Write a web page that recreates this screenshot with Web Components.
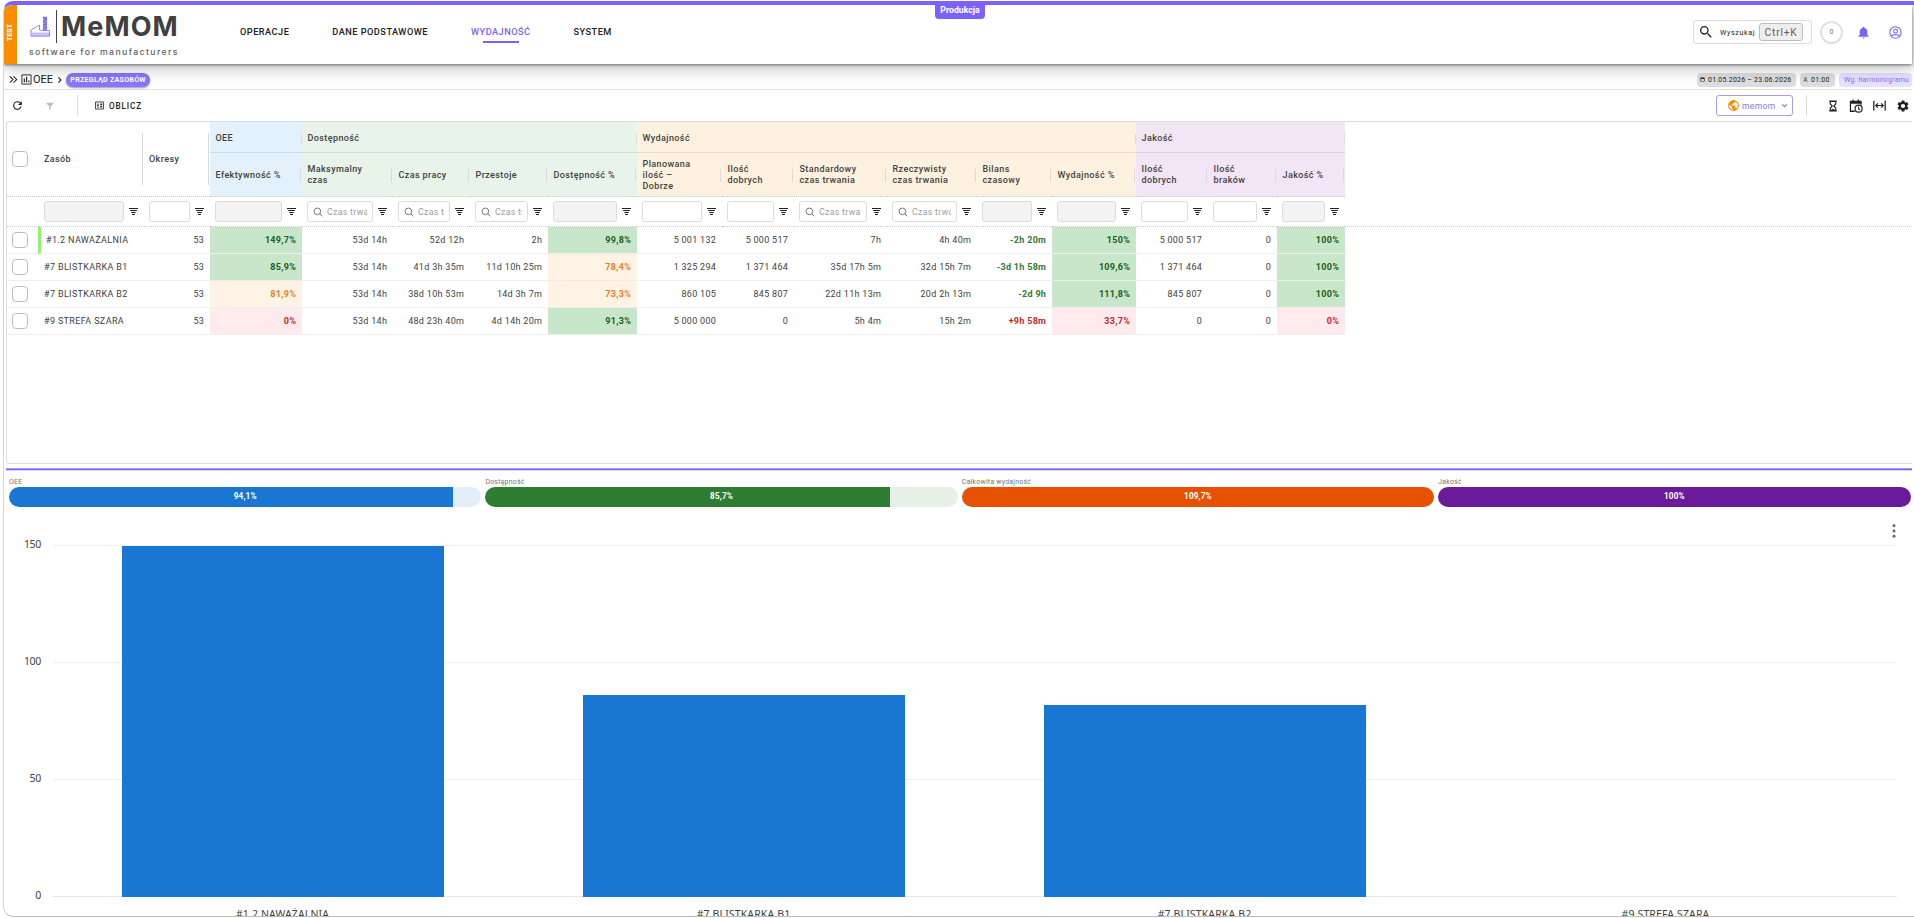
<!DOCTYPE html>
<html lang="pl">
<head>
<meta charset="utf-8">
<title>MeMOM - OEE</title>
<style>
    html, body {
        margin: 0;
        height: 918px;
        overflow: hidden;
        background: #fff;
        font-family: Roboto, "Liberation Sans", sans-serif;
        color: #424242;
    }
    mm-shell { --primary: #7b61ff; }
</style>
</head>
<body>
<mm-shell>
    <mm-header>
        <mm-nav-item>OPERACJE</mm-nav-item>
        <mm-nav-item>DANE PODSTAWOWE</mm-nav-item>
        <mm-nav-item active>WYDAJNOŚĆ</mm-nav-item>
        <mm-nav-item>SYSTEM</mm-nav-item>
    </mm-header>
    <mm-breadcrumb></mm-breadcrumb>
    <mm-toolbar></mm-toolbar>
    <mm-grid></mm-grid>
    <mm-splitter></mm-splitter>
    <mm-kpis>
        <mm-progress value="94.1" color="#1976d2" track="#e3eef9"><span slot="label">OEE</span>94,1%</mm-progress>
        <mm-progress value="85.7" color="#2e7d32" track="#e6f0e6"><span slot="label">Dostępność</span>85,7%</mm-progress>
        <mm-progress value="100" color="#e65100" track="#fbe9e0"><span slot="label">Całkowita wydajność</span>109,7%</mm-progress>
        <mm-progress value="100" color="#6a1b9a" track="#efe6f4"><span slot="label">Jakość</span>100%</mm-progress>
    </mm-kpis>
    <mm-chart></mm-chart>
</mm-shell>

<script>
const ICONS = {
    search: '<path d="M15.5 14h-.8l-.3-.3A6.5 6.5 0 1 0 13.7 14.4l.3.3v.8l5 5 1.5-1.5-5-5zm-6 0a4.5 4.5 0 1 1 0-9 4.5 4.5 0 0 1 0 9z"/>',
    bell: '<path d="M12 23a2 2 0 0 0 2-2h-4a2 2 0 0 0 2 2zm7-6.500v-6c0-3.300-1.700-6-5.300-6.700V3a1.700 1.700 0 0 0-3.400 0v.8C6.700 4.500 5 7.200 5 10.500v6L2.500 19v1h19v-1z"/>',
    user: '<path fill="none" stroke="currentColor" stroke-width="2" d="M12 1.500a10.500 10.500 0 1 0 0 21 10.500 10.500 0 0 0 0-21zM4.500 18.800c3-3.800 12-3.800 15 0"/><circle cx="12" cy="9.500" r="3.500" fill="none" stroke="currentColor" stroke-width="2"/>',
    chevrons: '<path fill="none" stroke="currentColor" stroke-width="2.300" d="M4 5l7 7-7 7M12 5l7 7-7 7"/>',
    chevron: '<path fill="none" stroke="currentColor" stroke-width="3.200" d="M7 4l8 8-8 8"/>',
    down: '<path fill="none" stroke="currentColor" stroke-width="3.600" d="M4 8l8 8 8-8"/>',
    chart: '<path fill="none" stroke="currentColor" stroke-width="2" d="M2 2h20v20H2z"/><path d="M6 10h2.500v8H6zM11 6h2.500v12H11zM16 14h2.500v4H16z"/>',
    refresh: '<path d="M17.650 6.350A8 8 0 1 0 19.730 14h-2.080A6 6 0 1 1 12 6c1.660 0 3.140.690 4.220 1.780L13 11h7V4z"/>',
    funnel: '<path d="M2 2h20v3l-7.500 8v9h-5v-9L2 5z"/>',
    calc: '<path fill="none" stroke="currentColor" stroke-width="2.200" d="M1.500 2.500h21v19h-21z"/><path d="M5 7h6v2H5zM5 11h6v2H5zM5 15h6v2H5zM14 6.500h5v4.500h-5zM14 13h5v4.500h-5z"/>',
    calendar: '<path d="M2 2h20v20H2zM5 9v10h14V9z" fill-rule="evenodd"/>',
    person: '<circle cx="12" cy="7" r="5" fill="none" stroke="currentColor" stroke-width="2.500"/><path fill="none" stroke="currentColor" stroke-width="2.500" d="M3 23l6-11M21 23l-6-11M6 18h12"/>',
    globe: '<path d="M12 2a10 10 0 1 0 0 20 10 10 0 0 0 0-20zm-1 17.930A8 8 0 0 1 4.210 10.210L9 15v1a2 2 0 0 0 2 2zm6.900-2.540A2 2 0 0 0 16 16h-1v-3a1 1 0 0 0-1-1H8v-2h2a1 1 0 0 0 1-1V7h2a2 2 0 0 0 2-2v-.410a8 8 0 0 1 2.900 12.800z"/>',
    hourglass: '<path fill="none" stroke="currentColor" stroke-width="2.200" d="M6.500 3h11v5L13.500 12l4 4V21h-11v-5l4-4-4-4z"/><path d="M4.500 1h15v2.500h-15zM4.500 20.500h15V23h-15zM9 17.500h6v2H9z"/>',
    schedule: '<path fill="none" stroke="currentColor" stroke-width="2.200" d="M10 21H2.500V4h18v6M7 1v4M16 1v4"/><path d="M2 4h19v4H2z"/><circle cx="16.500" cy="16.500" r="6" fill="none" stroke="currentColor" stroke-width="2"/><path fill="none" stroke="currentColor" stroke-width="1.800" d="M16.500 13v4l2.500 1.500"/>',
    fit: '<path fill="none" stroke="currentColor" stroke-width="2.300" d="M1.500 3v18M22.500 3v18M5 12h14M9 8l-4 4 4 4M15 8l4 4-4 4"/>',
    gear: '<path d="M19.140 12.940a7 7 0 0 0 0-1.880l2.030-1.580a.5.5 0 0 0 .120-.610l-1.920-3.320a.5.5 0 0 0-.590-.220l-2.390.960a7 7 0 0 0-1.620-.940l-.360-2.540a.5.5 0 0 0-.480-.410h-3.840a.5.5 0 0 0-.470.410l-.360 2.540a7 7 0 0 0-1.620.940l-2.390-.960a.5.5 0 0 0-.590.220L2.740 8.870a.5.5 0 0 0 .120.610l2.030 1.580a7 7 0 0 0 0 1.880l-2.030 1.580a.5.5 0 0 0-.120.610l1.920 3.320c.120.220.370.290.590.220l2.390-.960a7 7 0 0 0 1.620.940l.360 2.540c.050.240.240.410.480.410h3.840c.240 0 .440-.170.470-.410l.360-2.540a7 7 0 0 0 1.620-.940l2.390.960a.5.5 0 0 0 .590-.220l1.920-3.320a.5.5 0 0 0-.120-.610zM12 15.600a3.600 3.600 0 1 1 0-7.200 3.600 3.600 0 0 1 0 7.200z"/>',
    lines: '<path d="M0 2.700h24v2.670H0zM3 8h18v2.500H3zM6 13.300h12v2.500H6zM8 18.600h8v2.500H8z"/>',
    lens: '<circle cx="10.500" cy="10.500" r="8" fill="none" stroke="currentColor" stroke-width="2.400"/><path fill="none" stroke="currentColor" stroke-width="2.400" d="M16.500 16.500l6 6"/>',
    dots: '<circle cx="12" cy="3" r="2.500"/><circle cx="12" cy="12" r="2.500"/><circle cx="12" cy="21" r="2.500"/>'
}

class MmElement extends HTMLElement {
    constructor() {
        super()
        this.attachShadow({ mode: "open" })
    }
    connectedCallback() {
        const template = document.createElement("template")
        template.innerHTML = `<style>
            :host { display: block; box-sizing: border-box; }
            * { box-sizing: border-box; }
            ${this.getStyles()}
        </style>${this.getTemplate()}`
        this.shadowRoot.replaceChildren(template.content.cloneNode(true))
    }
}

class MmIcon extends MmElement {
    getStyles() {
        return `
            :host { width: ${this.getAttribute("size") || 12}px; flex: none; }
            svg { display: block; width: 100%; fill: currentColor; }
        `
    }
    getTemplate() {
        return `<svg viewBox="0 0 24 24">${ICONS[this.getAttribute("name")]}</svg>`
    }
}

class MmShell extends MmElement {
    getStyles() {
        return `
            :host { height: 917px; padding: 1px 0 0 3px; overflow: hidden; }
            .frame {
                width: 1920px;
                height: 916px;
                border: 1px solid #d5d5d5;
                border-top: 4px solid var(--primary);
                border-bottom-color: #bdbdbd;
                border-radius: 10px;
                overflow: hidden;
            }
            .body { width: 1908px; }
        `
    }
    getTemplate() {
        return `<div class="frame"><div class="body"><slot></slot></div></div>`
    }
}

class MmNavItem extends MmElement {
    getStyles() {
        return `
            :host {
                font-size: 9.200px;
                font-weight: 500;
                line-height: 12px;
                letter-spacing: .480px;
                color: #212121;
                white-space: nowrap;
            }
            :host([active]) { color: var(--primary); }
            .line { height: 2px; width: 36px; margin: 3px auto 0; }
            :host([active]) .line { background: var(--primary); }
        `
    }
    getTemplate() {
        return `<slot></slot><div class="line"></div>`
    }
}

class MmHeader extends MmElement {
    getStyles() {
        return `
            :host {
                display: flex;
                height: 59px;
                position: relative;
                z-index: 1;
                background: #fff;
                box-shadow: 0 1px 3px rgba(0,0,0,.5), 0 4px 16px rgba(0,0,0,.26);
            }
            .test {
                width: 13px;
                background: #fb8c00;
                color: #fff;
                font-size: 7px;
                font-weight: 900;
                writing-mode: vertical-rl;
                transform: rotate(180deg);
                text-align: center;
                line-height: 13px;
                padding-top: 4px;
            }
            .logo { width: 152px; margin: 4px 0 0 12px; flex: none; }
            .brand { display: flex; height: 35px; }
            .brand svg { width: 22px; height: 24px; margin: 7px 4px 0 1px; }
            .name {
                border-left: 1px solid #424242;
                height: 33px;
                margin-top: 1px;
                padding-left: 4px;
                font: 700 27px/33px Inter, "Open Sans", sans-serif;
                letter-spacing: 1.080px;
                color: #404040;
            }
            .tag {
                font: 500 8.700px/11px Inter, "Open Sans", sans-serif;
                letter-spacing: 1.400px;
                margin: 3px 0 0;
                color: #616161;
                white-space: nowrap;
            }
            nav { display: flex; gap: 43px; margin: 21px 0 0 59px; }
            .env {
                position: absolute;
                left: 931px;
                top: -1px;
                width: 50px;
                height: 15px;
                border-radius: 0 0 4px 4px;
                background: var(--primary);
                color: #fff;
                font-size: 8.700px;
                font-weight: 700;
                line-height: 12px;
                text-align: center;
            }
            .right { margin-left: auto; display: flex; align-items: center; height: 54px; color: var(--primary); padding-right: 10px; }
            .search {
                display: flex;
                align-items: center;
                width: 119px;
                height: 24px;
                border: 1px solid #ddd;
                border-radius: 3px;
                color: #212121;
                font-size: 7.200px;
                letter-spacing: .600px;
                padding-left: 4px;
            }
            .search span { margin-left: 6px; width: 39px; }
            kbd {
                width: 44px;
                height: 18px;
                border: 1px solid #bdbdbd;
                border-radius: 3px;
                background: #eee;
                color: #616161;
                font: 400 10.200px/17px Roboto, sans-serif;
                letter-spacing: .800px;
                text-align: center;
            }
            .count {
                width: 23px;
                height: 23px;
                margin: 0 14px 0 8px;
                border: 2px solid #e0e0e0;
                border-radius: 50%;
                font-size: 7px;
                line-height: 19px;
                text-align: center;
                color: #757575;
            }
        `
    }
    getTemplate() {
        return `
            <div class="test">TEST</div>
            <div class="logo">
                <div class="brand">
                    <svg viewBox="0 0 22 24">
                        <path d="M1.500 16.500h18v3.500h-18z" fill="#c9c0ff"/>
                        <path d="M1 20.200V14L9.500 9v5L13.500 14.500H19.500V20.200H1" fill="none" stroke="#8f7bff" stroke-width=".9"/>
                        <path d="M13 .8h4V14.500h-4z" fill="#8069ff"/>
                        <path d="M14 3v1M16 5v1M14 7v1M16 9v1M14 11v1M16 13v1" stroke="#c9c0ff"/>
                    </svg>
                    <div class="name">MeMOM</div>
                </div>
                <div class="tag">software for manufacturers</div>
            </div>
            <nav><slot></slot></nav>
            <div class="env">Produkcja</div>
            <div class="right">
                <div class="search"><mm-icon name="search" size="16"></mm-icon><span>Wyszukaj</span><kbd>Ctrl+K</kbd></div>
                <div class="count">0</div>
                <mm-icon name="bell" size="13"></mm-icon>
                <mm-icon name="user" size="13" style="margin-left:19px"></mm-icon>
            </div>
        `
    }
}

class MmBreadcrumb extends MmElement {
    getStyles() {
        return `
            :host {
                display: flex;
                align-items: center;
                height: 26px;
                padding: 6px 0 0 4px;
                border-bottom: 1px solid #e0e0e0;
                color: #212121;
            }
            .oee { font-size: 11px; margin-right: 3px; line-height: 14px; }
            .pill {
                width: 84px;
                height: 14px;
                margin-left: 2px;
                border-radius: 7px;
                background: #8c74ff;
                box-shadow: 0 1px 2px rgba(0,0,0,.4);
                color: #fff;
                font-size: 7.200px;
                font-weight: 700;
                letter-spacing: .200px;
                line-height: 14px;
                text-align: center;
                white-space: nowrap;
            }
            .chips { display: flex; gap: 4px; margin-left: auto; width: 215px; flex: none; }
            .chip {
                display: flex;
                align-items: center;
                height: 14px;
                border-radius: 4px;
                background: #dedede;
                padding-left: 3px;
                gap: 3px;
                font-size: 7px;
                letter-spacing: .220px;
                white-space: nowrap;
            }
            .plan { flex: 1; background: #e7e1ff; color: #8670ff; padding-left: 5px; }
        `
    }
    getTemplate() {
        return `
            <mm-icon name="chevrons" size="11"></mm-icon>
            <mm-icon name="chart" size="11" style="margin:0 1px 0 2px"></mm-icon>
            <span class="oee">OEE</span>
            <mm-icon name="chevron" size="8"></mm-icon>
            <div class="pill">PRZEGLĄD ZASOBÓW</div>
            <div class="chips">
                <div class="chip" style="width:99px"><mm-icon name="calendar" size="5"></mm-icon>01.05.2026 – 23.06.2026</div>
                <div class="chip" style="width:35px"><mm-icon name="person" size="5"></mm-icon>01:00</div>
                <div class="chip plan">Wg. harmonogramu</div>
            </div>
        `
    }
}

class MmToolbar extends MmElement {
    getStyles() {
        return `
            :host { display: flex; align-items: center; height: 31px; padding: 0 2px 0 7px; color: #212121; }
            .sep { width: 1px; height: 21px; background: #ddd; }
            .calc { font-size: 8.200px; font-weight: 500; letter-spacing: .850px; margin-left: 5px; line-height: 12px; }
            .select {
                display: flex;
                align-items: center;
                width: 77px;
                height: 21px;
                margin-left: auto;
                padding-left: 10px;
                border: 1px solid #a897ff;
                border-radius: 3px;
                color: #8670ff;
                font-size: 8.500px;
                letter-spacing: .400px;
            }
            .select span { margin: 0 5px 0 2px; }
            .tools { display: flex; align-items: center; gap: 10px; margin-left: 20px; }
        `
    }
    getTemplate() {
        return `
            <mm-icon name="refresh" size="13"></mm-icon>
            <mm-icon name="funnel" size="8" style="color:#bdbdbd;margin:0 23px 0 22px"></mm-icon>
            <div class="sep"></div>
            <mm-icon name="calc" size="9" style="margin-left:17px"></mm-icon>
            <span class="calc">OBLICZ</span>
            <div class="select">
                <mm-icon name="globe" size="13" style="color:#fb8c00"></mm-icon><span>memom</span>
                <mm-icon name="down" size="7"></mm-icon>
            </div>
            <div class="sep" style="margin-left:13px"></div>
            <div class="tools">
                <mm-icon name="hourglass" size="12"></mm-icon>
                <mm-icon name="schedule" size="14"></mm-icon>
                <mm-icon name="fit" size="13"></mm-icon>
                <mm-icon name="gear" size="14"></mm-icon>
            </div>
        `
    }
}

// w: width, f: filter kind (off = disabled, on = plain, time = with lens and placeholder)
const COLUMNS = [
    { t: "Efektywność %", w: 92, f: "off", g: "oee" },
    { t: "Maksymalny czas", w: 91, f: "time", g: "avail" },
    { t: "Czas pracy", w: 77, f: "time", g: "avail" },
    { t: "Przestoje", w: 78, f: "time", g: "avail" },
    { t: "Dostępność %", w: 89, f: "off", g: "avail" },
    { t: "Planowana ilość – Dobrze", w: 85, f: "on", g: "perf" },
    { t: "Ilość dobrych", w: 72, f: "on", g: "perf" },
    { t: "Standardowy czas trwania", w: 93, f: "time", g: "perf" },
    { t: "Rzeczywisty czas trwania", w: 90, f: "time", g: "perf" },
    { t: "Bilans czasowy", w: 75, f: "off", g: "perf" },
    { t: "Wydajność %", w: 84, f: "off", g: "perf" },
    { t: "Ilość dobrych", w: 72, f: "on", g: "qual" },
    { t: "Ilość braków", w: 69, f: "on", g: "qual" },
    { t: "Jakość %", w: 68, f: "off", g: "qual" }
]
const GROUPS = [["OEE", "oee", 1], ["Dostępność", "avail", 4], ["Wydajność", "perf", 6], ["Jakość", "qual", 3]]
const ROWS = [
    ["#1.2 NAWAŻALNIA", "53", "149,7%|good", "53d 14h", "52d 12h", "2h", "99,8%|good", "5 001 132", "5 000 517", "7h", "4h 40m", "-2h 20m|minus", "150%|good", "5 000 517", "0", "100%|good"],
    ["#7 BLISTKARKA B1", "53", "85,9%|good", "53d 14h", "41d 3h 35m", "11d 10h 25m", "78,4%|warn", "1 325 294", "1 371 464", "35d 17h 5m", "32d 15h 7m", "-3d 1h 58m|minus", "109,6%|good", "1 371 464", "0", "100%|good"],
    ["#7 BLISTKARKA B2", "53", "81,9%|warn", "53d 14h", "38d 10h 53m", "14d 3h 7m", "73,3%|warn", "860 105", "845 807", "22d 11h 13m", "20d 2h 13m", "-2d 9h|minus", "111,8%|good", "845 807", "0", "100%|good"],
    ["#9 STREFA SZARA", "53", "0%|bad", "53d 14h", "48d 23h 40m", "4d 14h 20m", "91,3%|good", "5 000 000", "0", "5h 4m", "15h 2m", "+9h 58m|plus", "33,7%|bad", "0", "0", "0%|bad"]
]

class MmFilter extends MmElement {
    getStyles() {
        return `
            :host { display: flex; align-items: center; padding: 0 6px 0 5px; gap: 5px; height: 29px; }
            .box {
                flex: 1;
                min-width: 0;
                height: 21px;
                border: 1px solid #dcdcdc;
                border-radius: 3px;
                display: flex;
                align-items: center;
                padding: 0 5px;
                gap: 4px;
                color: #9e9e9e;
                font-size: 8.800px;
                letter-spacing: .300px;
            }
            :host([kind=off]) .box { background: #f3f3f3; }
            .box span { overflow: hidden; white-space: nowrap; line-height: 12px; }
        `
    }
    getTemplate() {
        const inner = this.getAttribute("kind") == "time" ? `<mm-icon name="lens" size="10" style="color:#757575"></mm-icon><span>Czas trwania</span>` : ""
        return `<div class="box">${inner}</div><mm-icon name="lines" size="9" style="color:#202020"></mm-icon>`
    }
}

class MmGrid extends MmElement {
    getStyles() {
        return `
            :host {
                height: 343px;
                margin-left: 2px;
                border: 1px solid #dcdcdc;
                border-right: 0;
                border-radius: 4px 0 0 4px;
                font-size: 9px;
                letter-spacing: .300px;
            }
            .grid {
                display: grid;
                grid-template-columns: 32px 105px 66px ${COLUMNS.map(c => c.w + "px").join(" ")} 1fr;
                grid-template-rows: 31px 44px 30px repeat(4, 27px);
            }
            .h { font-weight: 500; letter-spacing: .400px; line-height: 11px; display: flex; align-items: center; padding: 1px 0 0 5.500px; }
            .h::after { content: ""; margin-left: auto; margin-right: 1px; flex: none; width: 1px; height: 13px; background: #dadada; }
            .h.group { border-bottom: 1px solid rgba(130,130,150,.2); padding-top: 2px; }
            .h.group::after { height: 9px; margin-right: 0; }
            .h.tall { grid-row: 1 / 3; border-bottom: 1px dotted #ccc; padding: 0 0 0 5px; }
            .h.tall::after { height: 52px; }
            .h.bare::after { display: none; }
            .h.leaf { border-bottom: 1px dotted #ccc; }
            .oee { background: #e3f1fd; }
            .avail { background: #e8f3e9; }
            .perf { background: #fff1e0; }
            .qual { background: #f2e5f5; }
            .f { border-bottom: 1px dotted #ccc; }
            .c {
                border-bottom: 1px solid #eee;
                text-align: right;
                padding: 0 5.800px 0 5px;
                line-height: 26px;
                white-space: nowrap;
                overflow: hidden;
            }
            .c.name { text-align: left; letter-spacing: .360px; }
            .c.mark { border-left: 3px solid #8bf573; padding-left: 5px; margin-left: -1px; }
            .good, .warn, .bad, .minus, .plus { font-weight: 700; }
            .good { background: #c8e6c9; color: #1b5e20; }
            .warn { background: #fff3e5; color: #ef7c1a; }
            .bad { background: #ffebee; color: #c62828; }
            .minus { color: #2e7d32; }
            .plus { color: #c62828; }
            .check { width: 16px; height: 16px; border: 1px solid #bdbdbd; border-radius: 4px; margin: 5px 0 0 5px; }
            .h .check { margin: 0; }
        `
    }
    getTemplate() {
        const groups = GROUPS.map(([t, g, n]) => `<div class="h group ${g}" style="grid-column:span ${n}">${t}</div>`).join("")
        const leafs = COLUMNS.map(c => `<div class="h leaf ${c.g}"><div ${c.t.endsWith("%") || c.t == "Czas pracy" ? "" : `style="max-width:${c.w - 26}px"`}>${c.t}</div></div>`).join("")
        const filters = COLUMNS.map(c => `<div class="f"><mm-filter kind="${c.f}"></mm-filter></div>`).join("")
        const rows = ROWS.map((row, r) => `<div class="c" style="padding:0"><div class="check"></div></div>` + row.map((cell, i) => {
            const [text, tone] = cell.split("|")
            const cls = [i == 0 ? "name" : "", i == 0 && r == 0 ? "mark" : "", tone || ""].join(" ")
            return `<div class="c ${cls}">${text}</div>`
        }).join("") + `<div></div>`).join("")
        return `
            <div class="grid">
                <div class="h tall bare"><div class="check"></div></div>
                <div class="h tall">Zasób</div>
                <div class="h tall">Okresy</div>
                ${groups}<div></div>
                ${leafs}<div></div>
                <div class="f"></div>
                <div class="f"><mm-filter kind="off"></mm-filter></div>
                <div class="f"><mm-filter kind="on"></mm-filter></div>
                ${filters}<div class="f"></div>
                ${rows}
            </div>
        `
    }
}

class MmSplitter extends MmElement {
    getStyles() {
        return `:host { height: 3px; margin: 4px 0 0 2px; background: linear-gradient(#a897ff 33%, var(--primary) 33% 67%, #d9d2ff 67%); }`
    }
    getTemplate() { return "" }
}

class MmKpis extends MmElement {
    getStyles() {
        return `:host { display: grid; grid-template-columns: repeat(4, 1fr); gap: 4px; padding: 6px 1.500px 0 5px; }`
    }
    getTemplate() { return `<slot></slot>` }
}

class MmProgress extends MmElement {
    getStyles() {
        return `
            .label { font-size: 6.900px; line-height: 11px; letter-spacing: .250px; color: #757575; height: 10px; }
            .track {
                height: 20px;
                border-radius: 10px;
                color: #fff;
                font-size: 8.200px;
                font-weight: 700;
                letter-spacing: .150px;
                line-height: 18.500px;
                text-align: center;
                background: linear-gradient(to right, ${this.getAttribute("color")} ${this.getAttribute("value")}%, ${this.getAttribute("track")} 0);
            }
        `
    }
    getTemplate() {
        return `<div class="label"><slot name="label"></slot></div><div class="track"><slot></slot></div>`
    }
}

class MmChart extends MmElement {
    getStyles() {
        return `
            :host { display: flex; height: 409px; padding-top: 38px; position: relative; font: 10.500px/14px "Noto Sans", "Open Sans", sans-serif; color: #424242; }
            .menu { position: absolute; right: 11px; top: 17px; color: #616161; }
            .axis {
                display: flex;
                flex-direction: column;
                justify-content: space-between;
                flex: none;
                width: 37px;
                height: 365px;
                margin-top: -8px;
                text-align: right;
                letter-spacing: -.300px;
            }
            .main { flex: none; width: 1844px; margin-left: 12px; }
            .plot {
                height: 352px;
                border-bottom: 1px solid #e6e6e6;
                display: grid;
                grid-template-columns: repeat(4, 461px);
                align-items: end;
                background: repeating-linear-gradient(#f0f0f0 0 1px, transparent 1px 117px);
            }
            .bar { width: 322px; margin: 0 0 -1px 69px; background: #1976d2; }
            .names { display: grid; grid-template-columns: repeat(4, 461px); text-align: center; margin: 10px 0 0 -1px; letter-spacing: .130px; }
        `
    }
    getTemplate() {
        const data = [["#1.2 NAWAŻALNIA", 351], ["#7 BLISTKARKA B1", 202], ["#7 BLISTKARKA B2", 192], ["#9 STREFA SZARA", 0]]
        return `
            <mm-icon class="menu" name="dots" size="14"></mm-icon>
            <div class="axis"><span>150</span><span>100</span><span>50</span><span>0</span></div>
            <div class="main">
                <div class="plot">${data.map(d => `<div class="bar" style="height:${d[1]}px"></div>`).join("")}</div>
                <div class="names">${data.map(d => `<span>${d[0]}</span>`).join("")}</div>
            </div>
        `
    }
}

customElements.define("mm-icon", MmIcon)
customElements.define("mm-shell", MmShell)
customElements.define("mm-nav-item", MmNavItem)
customElements.define("mm-header", MmHeader)
customElements.define("mm-breadcrumb", MmBreadcrumb)
customElements.define("mm-toolbar", MmToolbar)
customElements.define("mm-filter", MmFilter)
customElements.define("mm-grid", MmGrid)
customElements.define("mm-splitter", MmSplitter)
customElements.define("mm-kpis", MmKpis)
customElements.define("mm-progress", MmProgress)
customElements.define("mm-chart", MmChart)
</script>
</body>
</html>
